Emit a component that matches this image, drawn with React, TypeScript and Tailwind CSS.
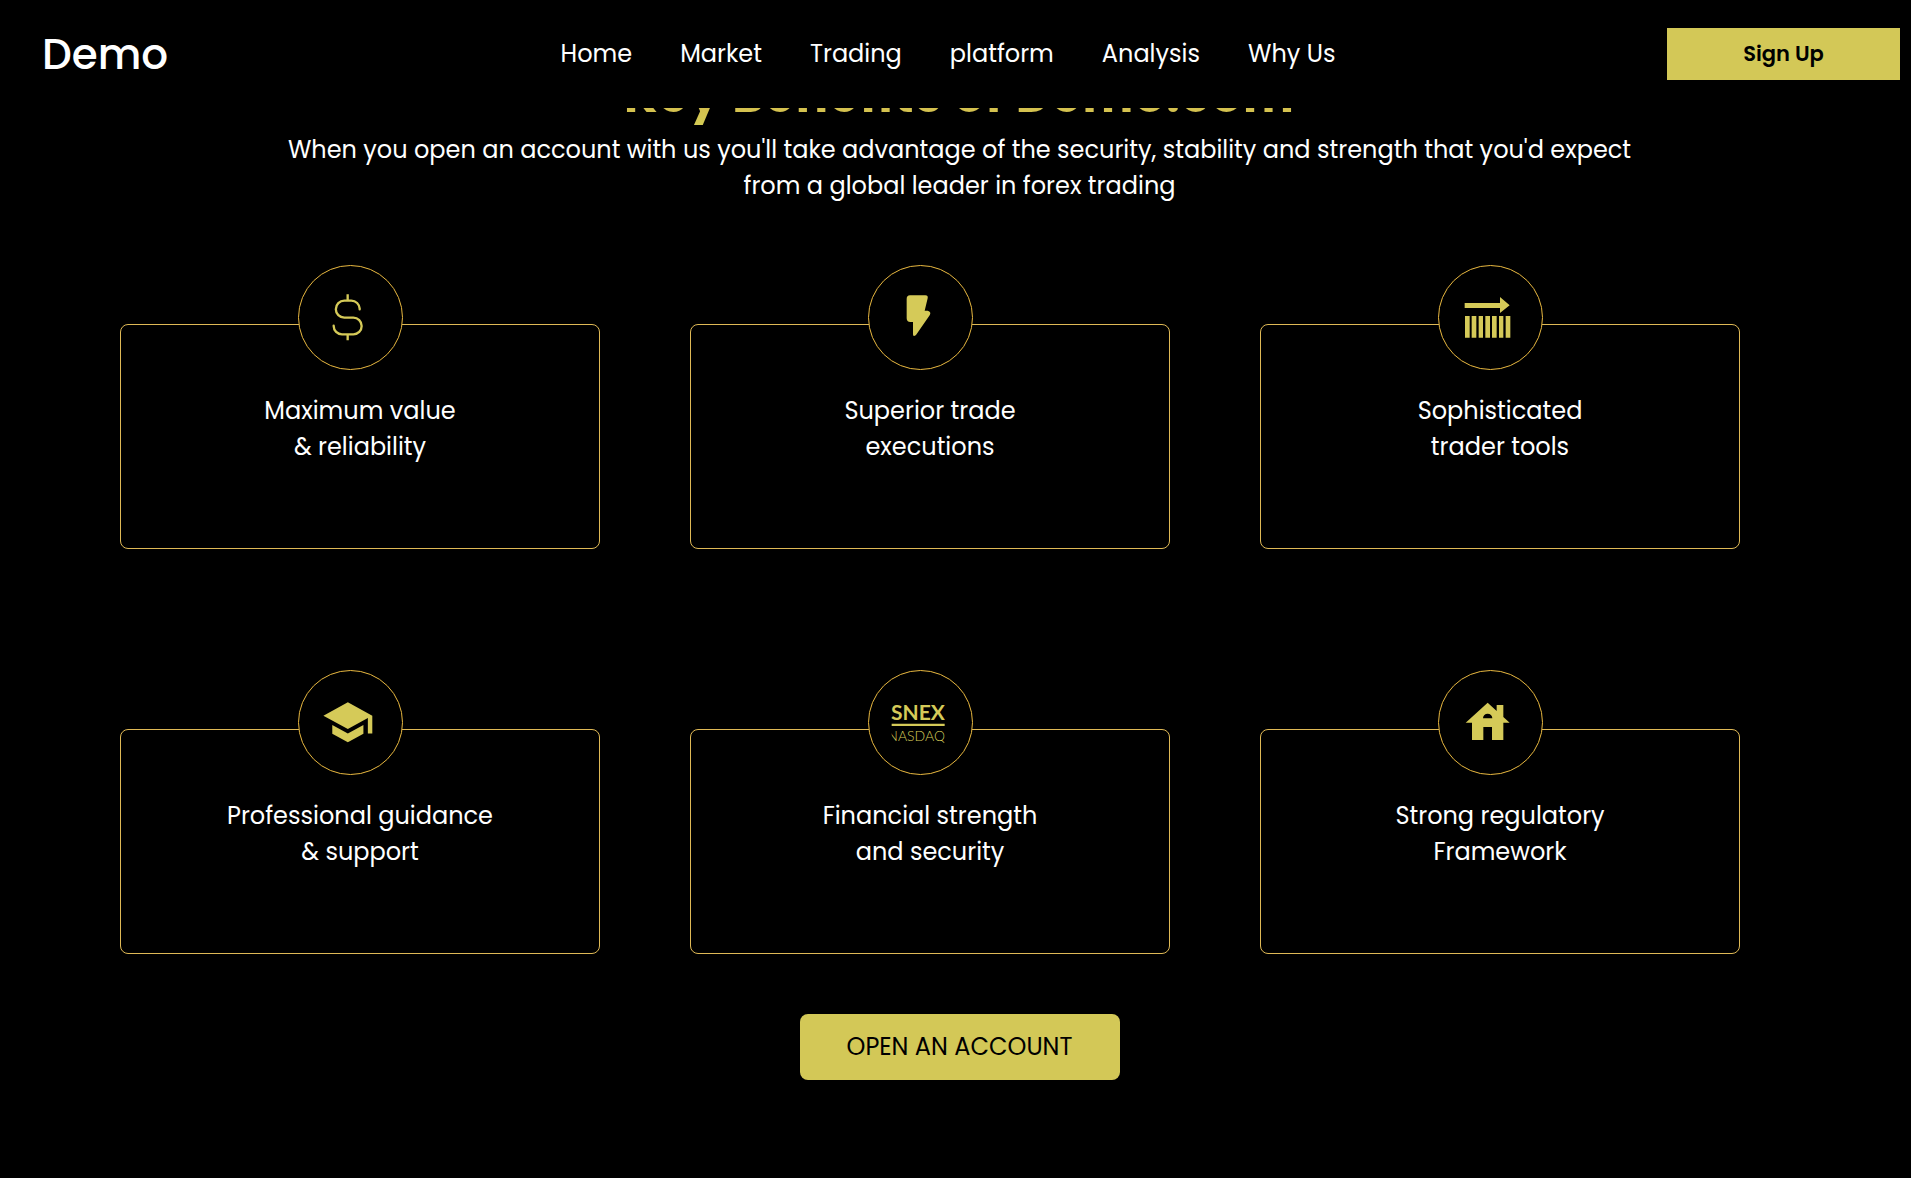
import type { ReactNode } from "react";

const navItems = ["Home", "Market", "Trading", "platform", "Analysis", "Why Us"];

function DollarIcon() {
  return (
    <g fill="none" stroke="currentColor" strokeWidth="7" strokeLinecap="round">
      <path d="M240 178v-2a25 25 0 0 0-25-24h-21a25.500 25.500 0 0 0 0 51h27a25 25 0 0 1 0 50h-34a25 25 0 0 1-25-25v-1" />
      <path d="M204 133v19M204 253v18" strokeLinecap="butt" />
    </g>
  );
}

function BoltIcon() {
  return (
    <path d="M181 136h46q9 0 7 9l-9 37h9q12 3 6 14l-41 59q-9 7-9-2v-37h-8q-11 0-11-11v-58q0-11 10-11z" />
  );
}

function ToolsIcon() {
  return (
    <>
      <path d="M135 159h106v-18l29 25-29 23v-15H135z" />
      <path d="M136 198h14v65h-14zM156 198h14v65h-14zM177 198h13v65h-13zM197 198h14v65h-14zM217 198h14v65h-14zM238 198h13v65h-13zM258 198h14v65h-14z" />
    </>
  );
}

function GraduationIcon() {
  return (
    <path
      transform="translate(124.500 122) scale(6.67)"
      d="M5 13.180v4L12 21l7-3.820v-4L12 17l-7-3.820zM12 3L1 9l11 6 9-4.910V17h2V9L12 3z"
    />
  );
}

function NasdaqIcon() {
  return (
    <>
      <text x="205" y="194" textAnchor="middle" fontSize="63" fontWeight="700" fontFamily="Lato, sans-serif">
        SNEX
      </text>
      <path d="M126 206h159v7H126z" />
      <svg x="126" y="216" width="159" height="50" viewBox="0 0 159 50">
        <text x="160" y="41" textAnchor="end" fontSize="42" fontWeight="300" fontFamily="Lato, sans-serif">
          NASDAQ
        </text>
      </svg>
    </>
  );
}

function HouseIcon() {
  return (
    <path
      fillRule="evenodd"
      d="M204 143l27 25v-18h20v36l19 17h-19v52h-34v-39h-26v39h-34v-52h-19zM190 190h28a14 14 0 0 0-28 0z"
    />
  );
}

const benefits: { lines: [string, string]; icon: ReactNode }[] = [
  { lines: ["Maximum value", "& reliability"], icon: <DollarIcon /> },
  { lines: ["Superior trade", "executions"], icon: <BoltIcon /> },
  { lines: ["Sophisticated", "trader tools"], icon: <ToolsIcon /> },
  { lines: ["Professional guidance", "& support"], icon: <GraduationIcon /> },
  { lines: ["Financial strength", "and security"], icon: <NasdaqIcon /> },
  { lines: ["Strong regulatory", "Framework"], icon: <HouseIcon /> },
];

function BenefitCard({ lines, icon }: { lines: [string, string]; icon: ReactNode }) {
  return (
    <li className="relative rounded-lg border border-[#dfb956] px-4 pt-[68px] pb-[83px] text-center">
      <div className="absolute inset-x-0 -top-[60px] flex justify-center pr-5">
        <div className="size-[105px] rounded-full border border-[#e8b840] bg-black text-[#d5ca58]">
          <svg viewBox="58 48 309 309" className="size-full" fill="currentColor" aria-hidden="true">
            {icon}
          </svg>
        </div>
      </div>
      <h2 className="text-2xl leading-9">
        {lines[0]}
        <br />
        {lines[1]}
      </h2>
    </li>
  );
}

export default function App() {
  return (
    <div className="min-h-screen bg-black font-['Poppins',Inter,sans-serif] text-white">
      <header className="fixed inset-x-0 top-0 z-10 grid h-27 grid-cols-[1fr_auto_1fr] items-center bg-black pr-[11px]">
        <a href="#" className="pl-[42px] text-[42px] font-medium">
          Demo
        </a>
        <nav className="flex gap-12 pr-1 text-2xl">
          {navItems.map((item) => (
            <a key={item} href="#">
              {item}
            </a>
          ))}
        </nav>
        <button className="h-[52px] w-[233px] justify-self-end bg-[#d3c857] text-[21px] font-semibold text-black">
          Sign Up
        </button>
      </header>

      <main className="pt-15 pb-24">
        <div className="pl-2 text-center">
          <h1 className="bg-linear-to-b from-[#d4a03c] to-[#d3d057] bg-clip-text text-5xl leading-[72px] font-bold tracking-wide text-transparent">
            Key Benefits of Demo.com
          </h1>
          <p className="mx-auto max-w-[1400px] text-2xl leading-9">
            When you open an account with us you'll take advantage of the security, stability and strength that you'd
            expect
            <br />
            from a global leader in forex trading
          </p>
        </div>

        <ul className="mt-30 grid grid-cols-3 gap-x-[90px] gap-y-45 pr-[171px] pl-30">
          {benefits.map((b) => (
            <BenefitCard key={b.lines[0]} {...b} />
          ))}
        </ul>

        <div className="mt-15 flex justify-center pl-2">
          <button className="h-[66px] w-80 rounded-lg bg-[#d3c857] text-2xl text-black">OPEN AN ACCOUNT</button>
        </div>
      </main>
    </div>
  );
}
